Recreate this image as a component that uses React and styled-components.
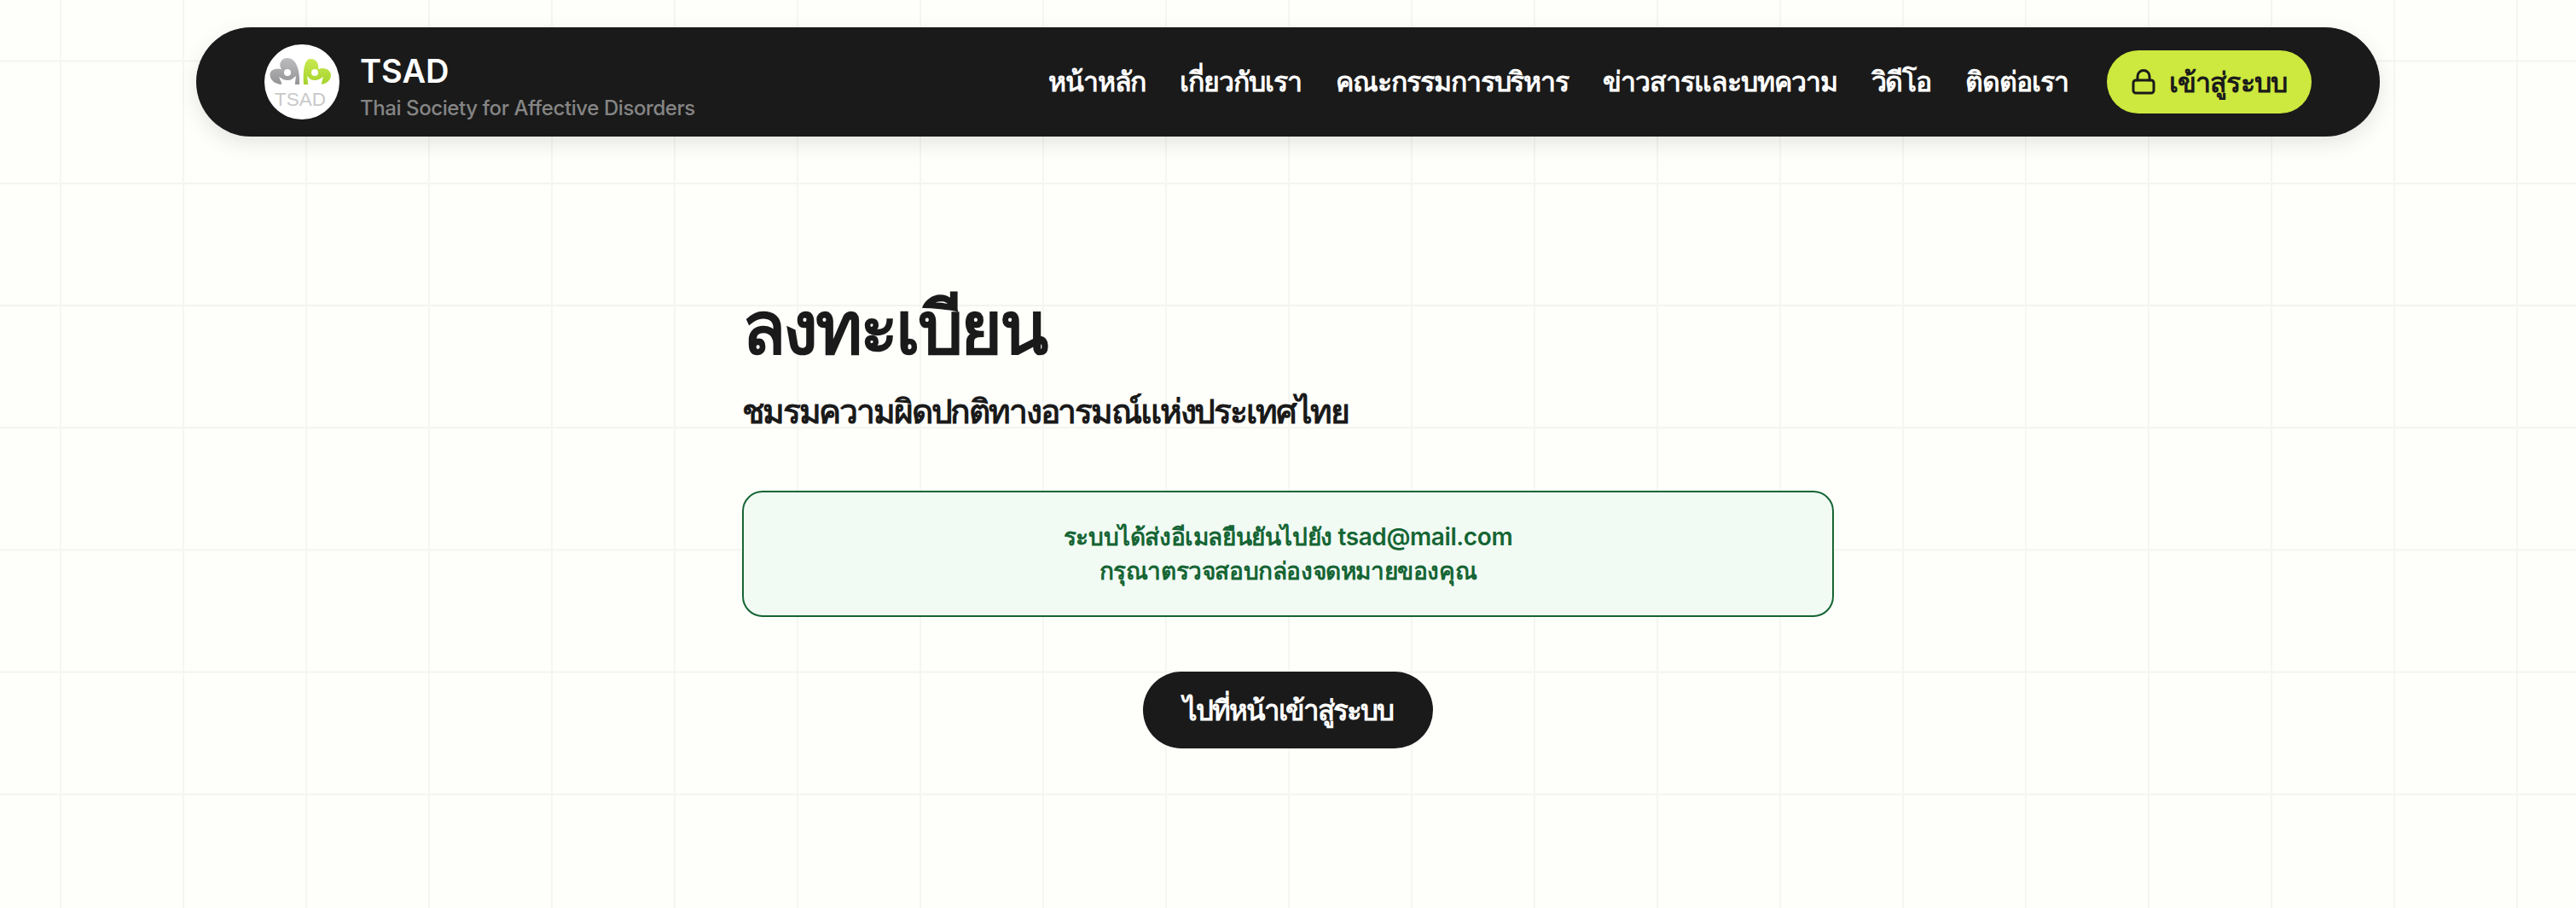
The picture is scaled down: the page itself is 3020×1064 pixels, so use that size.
import React from "react";
import styled, { createGlobalStyle } from "styled-components";

const Global = createGlobalStyle`
  html, body { margin: 0; padding: 0; }
  body {
    min-height: 1064px;
    background-color: #fefffb;
    background-image:
      linear-gradient(to right, transparent 70px, #f5f6f2 70px, #f5f6f2 72px, transparent 72px),
      linear-gradient(to bottom, transparent 71px, #f3f4f0 71px, #f3f4f0 73px, transparent 73px);
    background-size: 144px 143.2px;
    font-family: "Inter", "Noto Sans", sans-serif;
    overflow: hidden;
  }
`;

const Page = styled.div`
  display: flex;
  flex-direction: column;
  align-items: center;
  padding-top: 32px;
`;

const Nav = styled.nav`
  box-sizing: border-box;
  width: 2560px;
  height: 128px;
  border-radius: 64px;
  background: #1a1a1a;
  box-shadow: 0 8px 24px rgba(0, 0, 0, 0.1);
  display: flex;
  align-items: center;
  justify-content: space-between;
  padding: 0 80px;
`;

const Brand = styled.div`
  display: flex;
  align-items: center;
  gap: 24px;
`;

const LogoBadge = styled.div`
  width: 88px;
  height: 88px;
  border-radius: 50%;
  background: #fff;
  display: flex;
  align-items: center;
  justify-content: center;
  overflow: hidden;
`;

const BrandText = styled.div`
  display: flex;
  flex-direction: column;
  gap: 4px;
  padding-top: 10px;
`;

const BrandName = styled.div`
  color: #fff;
  font-size: 38px;
  line-height: 48px;
  font-weight: 600;
`;

const BrandSub = styled.div`
  color: #858585;
  font-size: 24px;
  line-height: 32px;
  font-weight: 500;
  letter-spacing: -0.42px;
`;

const Links = styled.div`
  display: flex;
  align-items: center;
  gap: 40px;
`;

const NavLink = styled.a`
  color: #fff;
  font-size: 32px;
  line-height: 48px;
  font-weight: 600;
  letter-spacing: -1.05px;
`;

const LoginButton = styled.button`
  height: 74px;
  width: 240px;
  margin-left: 5px;
  border: 0;
  border-radius: 37px;
  background: #cde83e;
  color: #1a1a1a;
  font: inherit;
  font-size: 32px;
  font-weight: 600;
  letter-spacing: -0.9px;
  display: flex;
  align-items: center;
  justify-content: center;
  gap: 16px;
`;

const Main = styled.main`
  box-sizing: border-box;
  width: 1280px;
  margin-top: 176px;
  display: flex;
  flex-direction: column;
`;

const Title = styled.h1`
  margin: 0;
  color: #1a1a1a;
  font-size: 84px;
  line-height: 96px;
  font-weight: 800;
  letter-spacing: -3px;
`;

const Subtitle = styled.h2`
  margin: 26px 0 0;
  color: #1a1a1a;
  font-size: 39px;
  line-height: 48px;
  font-weight: 800;
  letter-spacing: -2.15px;
`;

const Notice = styled.div`
  box-sizing: border-box;
  margin-top: 69px;
  height: 148px;
  border: 2px solid #166534;
  border-radius: 24px;
  background: #f1fbf4;
  color: #166534;
  font-size: 28px;
  line-height: 40px;
  font-weight: 600;
  letter-spacing: -0.4px;
  display: flex;
  flex-direction: column;
  align-items: center;
  justify-content: center;
`;

const Action = styled.button`
  align-self: center;
  margin-top: 64px;
  width: 340px;
  height: 90px;
  border: 0;
  border-radius: 45px;
  background: #1a1a1a;
  color: #fff;
  font: inherit;
  font-size: 33px;
  font-weight: 700;
  letter-spacing: -2.1px;
`;

const Logo = () => (
  <svg width="88" height="88" viewBox="0 0 88 88">
    <defs>
      <linearGradient id="g1" x1="0" y1="0" x2="0" y2="1">
        <stop offset="0" stopColor="#bcbcbe" />
        <stop offset="1" stopColor="#949497" />
      </linearGradient>
      <linearGradient id="g2" x1="0" y1="0" x2="0" y2="1">
        <stop offset="0" stopColor="#c8ea50" />
        <stop offset="1" stopColor="#a6d32c" />
      </linearGradient>
    </defs>
    <path d="M41 47 C42 32 38 16 27 16 C19 16 16 24 20 29 C13 27 6 30 6.5 36 C7 43 14 47 21 47 Z" fill="url(#g1)" />
    <circle cx="27" cy="33" r="4" fill="#fff" />
    <path d="M17 38 L22 41 Q27 43 32 41 L37 37 L36 45 L36 50 L20 50 L20 45 Z" fill="#fff" />
    <path d="M46 47 C45 30 47 17 54 17 C62 17 64 24 63 29 C70 26 78 30 78 36 C78 43 71 47 65 47 Z" fill="url(#g2)" />
    <circle cx="59" cy="33" r="4" fill="#fff" />
    <path d="M50 37 L54 41 Q59 43 64 41 L69 38 L67 45 L67 50 L52 50 L51 45 Z" fill="#fff" />
    <text x="42" y="72" textAnchor="middle" fontFamily="Liberation Sans" fontSize="22.5" fill="#c9c9c9">TSAD</text>
  </svg>
);

const LockIcon = () => (
  <svg width="28" height="30" viewBox="0 0 28 30" fill="none" stroke="#1a1a1a" strokeWidth="3" strokeLinecap="round" strokeLinejoin="round">
    <rect x="2" y="13" width="24" height="15" rx="3" />
    <path d="M7 13 V8.5 A7 7 0 0 1 21 8.5 V13" />
  </svg>
);

const links = ["หน้าหลัก", "เกี่ยวกับเรา", "คณะกรรมการบริหาร", "ข่าวสารและบทความ", "วิดีโอ", "ติดต่อเรา"];

export default function App() {
  return (
    <Page>
      <Global />
      <Nav>
        <Brand>
          <LogoBadge><Logo /></LogoBadge>
          <BrandText>
            <BrandName>TSAD</BrandName>
            <BrandSub>Thai Society for Affective Disorders</BrandSub>
          </BrandText>
        </Brand>
        <Links>
          {links.map((l) => <NavLink key={l}>{l}</NavLink>)}
          <LoginButton><LockIcon />เข้าสู่ระบบ</LoginButton>
        </Links>
      </Nav>
      <Main>
        <Title>ลงทะเบียน</Title>
        <Subtitle>ชมรมความผิดปกติทางอารมณ์แห่งประเทศไทย</Subtitle>
        <Notice>
          <div>ระบบได้ส่งอีเมลยืนยันไปยัง tsad@mail.com</div>
          <div>กรุณาตรวจสอบกล่องจดหมายของคุณ</div>
        </Notice>
        <Action>ไปที่หน้าเข้าสู่ระบบ</Action>
      </Main>
    </Page>
  );
}
